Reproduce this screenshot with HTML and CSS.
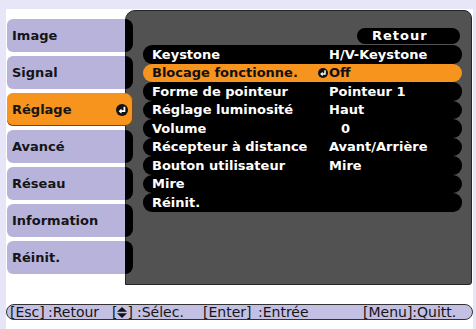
FILE: index.html
```html
<!DOCTYPE html>
<html lang="fr">
<head>
  <meta charset="UTF-8">
  <meta name="viewport" content="width=device-width, initial-scale=1.0">
  <title>Réglage</title>
  <link rel="stylesheet" href="styles.css">
</head>
<body>
  <div class="screen">
    <div class="main">
      <ul class="tabs">
        <li class="tab">Image</li>
        <li class="tab">Signal</li>
        <li class="tab active">Réglage
          <svg class="enter" viewBox="0 0 10 10"><circle cx="5" cy="5" r="5" fill="#111"/><path d="M7 2.3V6H4" stroke="#fff" stroke-width="1.5" fill="none"/><path d="M2.2 6L4.6 3.8V8.2Z" fill="#fff"/></svg>
        </li>
        <li class="tab">Avancé</li>
        <li class="tab">Réseau</li>
        <li class="tab">Information</li>
        <li class="tab">Réinit.</li>
      </ul>

      <div class="panel">
        <div class="row back"><span class="back-btn">Retour</span></div>
        <div class="row item"><span class="label">Keystone</span><span class="value">H/V-Keystone</span></div>
        <div class="row item selected">
          <span class="label">Blocage fonctionne.</span>
          <span class="value"><svg class="enter small" viewBox="0 0 10 10"><circle cx="5" cy="5" r="5" fill="#111"/><path d="M7 2.3V6H4" stroke="#fff" stroke-width="1.5" fill="none"/><path d="M2.2 6L4.6 3.8V8.2Z" fill="#fff"/></svg>Off</span>
        </div>
        <div class="row item"><span class="label">Forme de pointeur</span><span class="value">Pointeur 1</span></div>
        <div class="row item"><span class="label">Réglage luminosité</span><span class="value">Haut</span></div>
        <div class="row item"><span class="label">Volume</span><span class="value num">0</span></div>
        <div class="row item"><span class="label">Récepteur à distance</span><span class="value">Avant/Arrière</span></div>
        <div class="row item"><span class="label">Bouton utilisateur</span><span class="value">Mire</span></div>
        <div class="row item"><span class="label">Mire</span></div>
        <div class="row item"><span class="label">Réinit.</span></div>
      </div>
    </div>

    <div class="help">
      <span>[Esc]</span><span>:Retour</span>
      <span class="key">[<svg class="updown" viewBox="0 0 11 12"><path d="M0 5.2L5.5 0L11 5.2Z" fill="#111"/><path d="M0 6.8L5.5 12L11 6.8Z" fill="#111"/></svg>]</span><span>:Sélec.</span>
      <span>[Enter]</span><span>:Entrée</span>
      <span>[Menu]:Quitt.</span>
    </div>
  </div>
</body>
</html>
```

FILE: styles.css
```css
* {
  margin: 0;
  padding: 0;
  box-sizing: border-box;
}

body {
  background-color: #e6e6f8;
  font-family: "DejaVu Sans", "Noto Sans", sans-serif;
  font-size: 13px;
}

.screen {
  margin: 9px 3px 0 6px;
  height: 320px;
  background-color: #fff;
}

.main {
  display: flex;
  padding-top: 1px;
}

.tabs {
  list-style: none;
  width: 127px;
  padding: 9px 0 0 1px;
  display: flex;
  flex-direction: column;
  gap: 4px;
  position: relative;
  z-index: 1;
}

.tab {
  height: 33px;
  display: flex;
  align-items: center;
  padding-left: 5px;
  background: linear-gradient(to right, #b7b3db 118px, #000 118px);
  border-radius: 6px 8px 8px 6px;
  font-weight: 700;
  color: #151515;
}

.tab.active {
  background: #f7941e;
  justify-content: space-between;
  padding-right: 5px;
  box-shadow: inset 0 -1px 0 #6a4a20, inset -1px 0 0 #6a4a20;
}

.enter {
  width: 12px;
  height: 12px;
}

.panel {
  margin-left: -8px;
  width: 347px;
  height: 275px;
  background-color: #525252;
  border: 1px solid #262626;
  border-radius: 10px 8px 3px 0;
  padding: 15.5px 9px 0 17px;
}

.row {
  height: 18.5px;
  display: flex;
  align-items: center;
  font-weight: 700;
  white-space: nowrap;
}

.back {
  justify-content: flex-end;
}

.back-btn {
  width: 103px;
  height: 16px;
  margin-right: 2px;
  padding-left: 15px;
  line-height: 16px;
  background-color: #000;
  border-radius: 8px;
  color: #fff;
  letter-spacing: 1px;
}

.item {
  background-color: #000;
  border-radius: 9px;
  color: #fff;
  padding-left: 9px;
}

.item.selected {
  background-color: #f7941e;
  color: #111;
}

.label {
  width: 177px;
}

.value {
  display: flex;
  align-items: center;
}

.value.num {
  padding-left: 12px;
}

.enter.small {
  width: 10px;
  height: 10px;
  margin-left: -11px;
  margin-right: 1px;
}

.help {
  margin-top: 19px;
  width: 467px;
  height: 16px;
  background-color: #c4c0e4;
  border: 1px solid #333;
  border-radius: 8px;
  padding-left: 3px;
  display: grid;
  grid-template-columns: 38px 64px 25px 66px 55px 105px auto;
  align-items: center;
  color: #151515;
  font-size: 14px;
  line-height: 14px;
  white-space: nowrap;
}

.key {
  display: flex;
  align-items: center;
}

.updown {
  width: 10px;
  height: 11px;
}
```
